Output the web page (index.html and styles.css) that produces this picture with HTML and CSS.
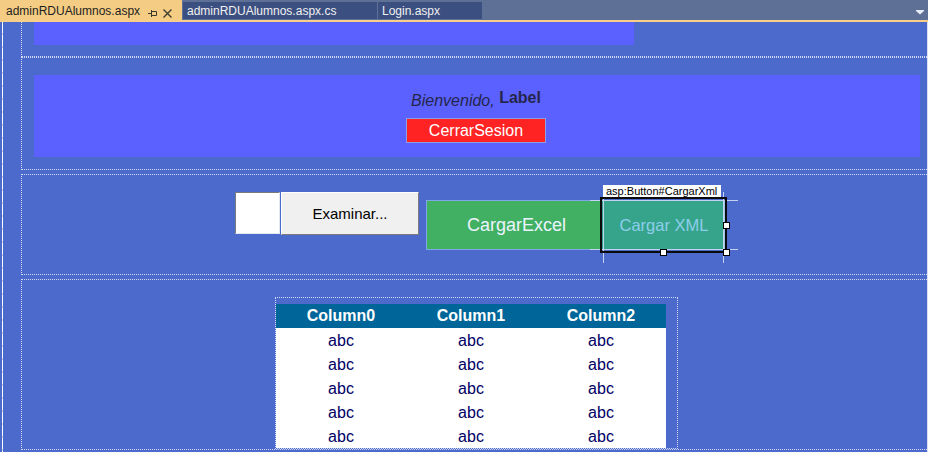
FILE: index.html
```html
<!DOCTYPE html>
<html>
<head>
<meta charset="utf-8">
<title>adminRDUAlumnos.aspx</title>
<link rel="stylesheet" href="styles.css">
</head>
<body>
<div class="tabbar">
  <div class="tab tab-active">
    <span class="tab-title">adminRDUAlumnos.aspx</span>
    <svg class="tab-pin" width="9" height="20" viewBox="0 0 9 20"><path d="M0 13.5H3.5M3.5 10V17M3.5 11.5H8.5V15.5H3.5" fill="none" stroke="#3b3a2c" stroke-width="1"/></svg>
    <svg class="tab-close" width="9" height="20" viewBox="0 0 9 20"><path d="M0.5 9.5L8.5 17.5M8.5 9.5L0.5 17.5" fill="none" stroke="#3b3a2c" stroke-width="1.3"/></svg>
  </div>
  <div class="tab tab-inactive tab-cs"><span class="tab-title">adminRDUAlumnos.aspx.cs</span></div>
  <div class="tab tab-inactive tab-login"><span class="tab-title">Login.aspx</span></div>
  <div class="tab-spacer"></div>
  <svg class="tab-menu" width="10" height="20" viewBox="0 0 10 20"><path d="M1 10H9V11L5 14.5L1 11Z" fill="#e6ebfa"/></svg>
</div>
<div class="accent"></div>
<div class="surface">
  <div class="rail"></div>
  <div class="page">
    <div class="section section-top">
      <div class="banner"></div>
    </div>
    <div class="section section-welcome">
      <div class="welcome">
        <div class="greet"><span class="greet-text">Bienvenido,</span> <span class="greet-label">Label</span></div>
        <button class="btn-logout">CerrarSesion</button>
      </div>
    </div>
    <div class="section section-upload">
      <div class="upload-row">
        <div class="file-box"></div>
        <button class="btn-browse">Examinar...</button>
        <button class="btn-excel">CargarExcel</button>
        <div class="xml-wrap">
          <button class="btn-xml">Cargar XML</button>
          <div class="guide guide-h guide-top"></div>
          <div class="guide guide-h guide-bottom"></div>
          <div class="guide guide-v guide-left"></div>
          <div class="guide guide-v guide-right"></div>
          <div class="selection"></div>
          <div class="tag">asp:Button#CargarXml</div>
          <div class="handle handle-right"></div>
          <div class="handle handle-bottom"></div>
          <div class="handle handle-corner"></div>
        </div>
      </div>
    </div>
    <div class="section section-grid">
      <div class="grid-wrap">
        <table class="grid">
          <thead>
            <tr><th>Column0</th><th>Column1</th><th>Column2</th></tr>
          </thead>
          <tbody>
            <tr><td>abc</td><td>abc</td><td>abc</td></tr>
            <tr><td>abc</td><td>abc</td><td>abc</td></tr>
            <tr><td>abc</td><td>abc</td><td>abc</td></tr>
            <tr><td>abc</td><td>abc</td><td>abc</td></tr>
            <tr><td>abc</td><td>abc</td><td>abc</td></tr>
          </tbody>
        </table>
      </div>
    </div>
  </div>
  <div class="edge"></div>
</div>
</body>
</html>
```
FILE: styles.css
```css
* { box-sizing: border-box; }
html, body { margin: 0; padding: 0; }
body {
  width: 928px;
  height: 452px;
  overflow: hidden;
  background: #4B6ACB;
  font-family: "Liberation Sans", Arial, sans-serif;
}

/* ---------- tab bar ---------- */
.tabbar {
  display: flex;
  height: 20px;
  background: #5F7097;
}
.tab {
  display: flex;
  align-items: flex-start;
  font-size: 12px;
  line-height: 15px;
  white-space: nowrap;
}
.tab-active {
  width: 182px;
  height: 20px;
  background: #F5CC84;
  color: #1E1E1E;
  padding: 4px 0 0 6px;
}
.tab-active .tab-title { width: 142px; }
.tab-pin, .tab-close { flex: none; margin-top: -4px; }
.tab-close { margin-left: 6px; }
.tab-inactive {
  margin-top: 2px;
  margin-left: 1px;
  height: 17px;
  background: #3C4F81;
  color: #F1F1F1;
  padding: 2px 0 0 4px;
}
.tab-cs { width: 194px; }
.tab-login { width: 104px; }
.tab-spacer { flex: 1; }
.tab-menu { flex: none; margin-right: 3px; }
.accent {
  height: 2px;
  background: #F7CF8A;
}

/* ---------- design surface ---------- */
.surface {
  display: flex;
  height: 430px;
  padding-left: 2px;
}
.rail {
  width: 1px;
  flex: none;
  background: repeating-linear-gradient(to bottom, #ffffff 0 11px, #c9d3f0 11px 13px);
}
.page {
  flex: 1;
  padding-left: 18px;
}
.edge {
  width: 1px;
  flex: none;
  background: #D9DFF1;
}
.section {
  border-left: 1px dotted #D3DAF4;
  border-bottom: 1px dotted #D3DAF4;
}
.section-top {
  padding: 0 0 11px 12px;
}
.banner {
  width: 600px;
  height: 23px;
  background: #5A61FF;
}
.section-welcome {
  border-top: 1px dotted #D3DAF4;
  padding: 17px 7px 12px 12px;
}
.welcome {
  height: 82px;
  background: #5A61FF;
  padding: 17px 2px 0 0;
  text-align: center;
}
.greet {
  height: 18px;
  line-height: 18px;
  font-size: 16px;
  color: #26264A;
}
.greet-text { font-style: italic; }
.greet-label {
  font-weight: bold;
  line-height: 12px;
  vertical-align: 3px;
}
.btn-logout {
  display: block;
  margin: 8px auto 0;
  width: 140px;
  height: 25px;
  padding: 0;
  background: #FF2323;
  border: 1px solid #8A9EE6;
  color: #FFFFFF;
  font: 16px "Liberation Sans", Arial, sans-serif;
}

/* ---------- upload row ---------- */
.section-upload {
  margin-top: 4px;
  border-top: 1px dotted #D3DAF4;
  padding: 17px 0 24px 213px;
}
.upload-row {
  display: flex;
  align-items: flex-start;
  height: 58px;
}
.file-box {
  width: 45px;
  height: 42px;
  background: #FFFFFF;
  border: 1px solid;
  border-color: #7A7A7A #E4E8F4 #E4E8F4 #7A7A7A;
}
.btn-browse {
  margin-left: 1px;
  width: 138px;
  height: 43px;
  padding: 0;
  background: #F0F0F0;
  border: 1px solid;
  border-color: #FFFFFF #7B7B7B #7B7B7B #FFFFFF;
  color: #000000;
  font: 15px "Liberation Sans", Arial, sans-serif;
}
.btn-excel {
  margin: 8px 0 0 7px;
  width: 175px;
  height: 50px;
  padding: 0 0 0 6px;
  background: #41B063;
  border: 1px solid #7FA6E6;
  color: #EAF4FF;
  font: 18px "Liberation Sans", Arial, sans-serif;
}
.xml-wrap {
  position: relative;
  margin-top: 8px;
  width: 124px;
  height: 50px;
}
.btn-xml {
  display: block;
  width: 124px;
  height: 50px;
  padding: 0 0 0 2px;
  background: #36A48A;
  border: 1px solid #9CCBEA;
  color: #8DCDEB;
  font: 16.5px "Liberation Sans", Arial, sans-serif;
}
.guide {
  position: absolute;
  background: #C4D2F2;
}
.guide-h { left: -11px; width: 148px; height: 1px; }
.guide-top { top: 0; }
.guide-bottom { top: 49px; }
.guide-v { top: -8px; width: 1px; height: 71px; }
.guide-left { left: 2px; }
.guide-right { left: 122px; }
.selection {
  position: absolute;
  left: -1px;
  top: -3px;
  width: 127px;
  height: 56px;
  border: 2px solid #0A0A0A;
}
.tag {
  position: absolute;
  left: 2px;
  top: -15px;
  width: 118px;
  height: 12px;
  background: #FFFFFF;
  color: #000000;
  font-size: 11px;
  line-height: 12px;
  padding-left: 3px;
  white-space: nowrap;
  overflow: hidden;
}
.handle {
  position: absolute;
  width: 7px;
  height: 7px;
  background: #FFFFFF;
  border: 1px solid #000000;
}
.handle-right { left: 122px; top: 22px; }
.handle-bottom { left: 59px; top: 49px; }
.handle-corner { left: 122px; top: 49px; }

/* ---------- grid ---------- */
.section-grid {
  margin-top: 4px;
  border-top: 1px dotted #D3DAF4;
  padding: 17px 0 0 253px;
}
.grid-wrap {
  width: 403px;
  border: 1px dotted #D3DAF4;
  padding-top: 6px;
}
.grid {
  width: 390px;
  border-collapse: collapse;
  table-layout: fixed;
  background: #FFFFFF;
}
.grid th, .grid td {
  width: 130px;
  height: 24px;
  padding: 0;
  text-align: center;
  font-size: 16px;
  line-height: 24px;
}
.grid th {
  background: #006699;
  color: #FFFFFF;
  font-weight: bold;
}
.grid td {
  color: #000066;
  padding-top: 2px;
  line-height: 22px;
}
```
